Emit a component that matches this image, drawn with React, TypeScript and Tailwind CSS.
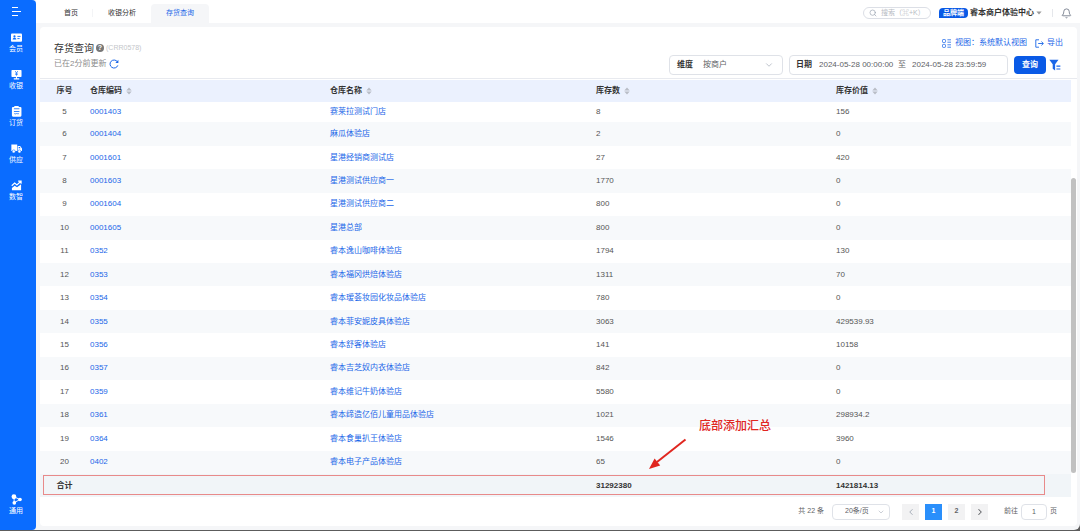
import type { ReactNode } from "react";
import { ChevronDown, ChevronLeft, ChevronRight, Search, Bell } from "lucide-react";

interface StockRow {
  no: number;
  code: string;
  name: string;
  qty: string;
  value: string;
}

const rows: StockRow[] = [
  { no: 5, code: "0001403", name: "赛莱拉测试门店", qty: "8", value: "156" },
  { no: 6, code: "0001404", name: "麻瓜体验店", qty: "2", value: "0" },
  { no: 7, code: "0001601", name: "星港经销商测试店", qty: "27", value: "420" },
  { no: 8, code: "0001603", name: "星港测试供应商一", qty: "1770", value: "0" },
  { no: 9, code: "0001604", name: "星港测试供应商二", qty: "800", value: "0" },
  { no: 10, code: "0001605", name: "星港总部", qty: "800", value: "0" },
  { no: 11, code: "0352", name: "睿本逸山咖啡体验店", qty: "1794", value: "130" },
  { no: 12, code: "0353", name: "睿本福冈烘焙体验店", qty: "1311", value: "70" },
  { no: 13, code: "0354", name: "睿本瑷荟妆园化妆品体验店", qty: "780", value: "0" },
  { no: 14, code: "0355", name: "睿本菲安妮皮具体验店", qty: "3063", value: "429539.93" },
  { no: 15, code: "0356", name: "睿本舒客体验店", qty: "141", value: "10158" },
  { no: 16, code: "0357", name: "睿本吉芝奴内衣体验店", qty: "842", value: "0" },
  { no: 17, code: "0359", name: "睿本维记牛奶体验店", qty: "5580", value: "0" },
  { no: 18, code: "0361", name: "睿本缔造亿佰儿童用品体验店", qty: "1021", value: "298934.2" },
  { no: 19, code: "0364", name: "睿本食巢扒王体验店", qty: "1546", value: "3960" },
  { no: 20, code: "0402", name: "睿本电子产品体验店", qty: "65", value: "0" },
];

const navItems: { label: string; icon: ReactNode }[] = [
  {
    label: "会员",
    icon: (
      <>
        <rect x="0" y="1.6" width="12" height="9" rx="1" fill="#fff" />
        <circle cx="3.8" cy="4.8" r="1.2" fill="#0a6cff" />
        <path d="M1.8 8.2c0-2.6 4-2.6 4 0z" fill="#0a6cff" />
        <path d="M7 4.8h3.4M7 7.2h2.4" stroke="#0a6cff" />
      </>
    ),
  },
  {
    label: "收银",
    icon: (
      <>
        <rect x="0.5" y="1" width="11" height="7.6" rx="0.8" fill="#fff" />
        <path d="M4.5 2.2 6 4.2l1.5-2M6 4.2v3.2M4.6 4.6h2.8M4.6 6h2.8" stroke="#0a6cff" strokeWidth="0.7" fill="none" />
        <path d="M6 8.6v2M3 10.8h6" stroke="#fff" strokeWidth="1.2" />
      </>
    ),
  },
  {
    label: "订货",
    icon: (
      <>
        <rect x="1" y="1" width="10.4" height="10.6" rx="1.2" fill="#fff" />
        <path d="M3.6 0h4.8v2H3.6z" fill="#fff" />
        <path d="M3.2 3h6M3.2 6h6M3.6 8.2c1 1 2 0 2.6 0s1.400.6 2.400 0" stroke="#0a6cff" strokeWidth="0.9" fill="none" />
      </>
    ),
  },
  {
    label: "供应",
    icon: (
      <>
        <path d="M0.4 1.6h6.400v7.200H0.400zM7.400 3.400h2.600L12 6v2.800H7.400z" fill="#fff" />
        <circle cx="3" cy="9.200" r="1.700" fill="#fff" stroke="#0a6cff" strokeWidth="0.600" />
        <circle cx="9.200" cy="9.200" r="1.700" fill="#fff" stroke="#0a6cff" strokeWidth="0.600" />
        <path d="M8.400 4.400h1.200l0.900 1.400H8.400z" fill="#0a6cff" />
      </>
    ),
  },
  {
    label: "数智",
    icon: (
      <>
        <path d="M1 11.200V8.600l3-2.400 2.600 1.800L11 4.600v6.600z" fill="#fff" />
        <path d="M0.800 6.200 4 3.400l2.400 1.900L10.600 1.600M7.800 1.200h3.200v3" stroke="#fff" strokeWidth="1.300" fill="none" />
      </>
    ),
  },
];

const generalIcon = (
  <>
    <circle cx="3.2" cy="3" r="2.6" fill="#fff" />
    <circle cx="3.6" cy="9.6" r="2" fill="#fff" />
    <circle cx="9.8" cy="6" r="2" fill="#fff" />
    <path d="M3.400 3v6.600L9.600 6z" stroke="#fff" fill="none" />
  </>
);

function NavItem({ label, icon }: { label: string; icon: ReactNode }) {
  return (
    <a href="#" className="flex flex-col items-center text-[7px] leading-[11px] text-white">
      <svg viewBox="0 0 12 12" className="w-[11px] h-[11px]">{icon}</svg>
      {label}
    </a>
  );
}

function SortHead({ children }: { children: ReactNode }) {
  return (
    <th className="pl-[5px] text-left font-bold">
      <button className="flex items-center gap-1">
        {children}
        <svg viewBox="0 0 6 8" className="w-1.5 h-2" fill="#b9bdc6">
          <path d="M3 0.4 5.7 3.4H0.3zM3 7.6 5.7 4.6H0.3z" />
        </svg>
      </button>
    </th>
  );
}

function Sidebar() {
  return (
    <nav className="w-9 shrink-0 flex flex-col items-center rounded-r bg-[#0a6cff] pr-1 pb-[14px]">
      <button aria-label="菜单" className="mt-[7px] mb-4">
        <svg viewBox="0 0 10 9" className="w-2.5 h-[9px]" stroke="#fff" fill="none">
          <path d="M1 0.5h6M1 4.5h9M1 8.5h6" />
        </svg>
      </button>
      <div className="flex flex-col gap-[15px]">
        {navItems.map((item) => (
          <NavItem key={item.label} {...item} />
        ))}
      </div>
      <div className="mt-auto">
        <NavItem label="通用" icon={generalIcon} />
      </div>
    </nav>
  );
}

function TopBar() {
  return (
    <header className="h-[23px] shrink-0 flex items-center bg-white pr-2 text-[7px] text-[#333]">
      <nav className="flex items-end self-stretch">
        <a href="#" className="w-14 h-[19px] pl-3.5 flex items-center justify-center">首页</a>
        <span className="w-px h-2 mb-1.5 bg-gray-100" />
        <a href="#" className="w-[58px] h-[19px] flex items-center justify-center">收银分析</a>
        <a href="#" className="w-[58px] h-[19px] rounded-t flex items-center justify-center bg-[#f5f6f8] text-[#1a66e8]">
          存货查询
        </a>
      </nav>
      <div className="ml-auto mt-[3px] flex items-center">
        <label className="w-[68px] h-3 px-[5px] flex items-center gap-1 rounded-full border border-[#dcdfe6]">
          <Search className="w-2 h-2 shrink-0 text-gray-400" />
          <input
            aria-label="搜索"
            placeholder="搜索（⌘+K）"
            className="min-w-0 flex-1 outline-none placeholder-[#b8bcc4]"
          />
        </label>
        <span className="ml-2 h-[10px] px-1 flex items-center rounded-r rounded-tl bg-[#0a5ae6] font-bold text-white">品牌端</span>
        <button className="ml-0.5 flex items-center gap-0.5 text-[8px] font-bold">
          睿本商户体验中心
          <svg viewBox="0 0 6 4" className="w-1.5 h-1" fill="#999"><path d="M0.4 0.4h5.2L3 3.4z" /></svg>
        </button>
        <span className="w-px h-2 ml-2.5 bg-gray-200" />
        <button aria-label="通知" className="ml-2">
          <Bell className="w-[11px] h-[11px] text-gray-500" strokeWidth={1.8} />
        </button>
      </div>
    </header>
  );
}

function PageHead() {
  return (
    <div className="h-[52px] shrink-0 px-3.5 flex justify-between border-b border-[#e8eaef]">
      <div className="pt-3.5">
        <div className="flex items-center h-3.5">
          <h1 className="text-[10px] text-[#333]">存货查询</h1>
          <span className="ml-0.5 w-2 h-2 rounded-full bg-[#777] text-white text-[7px] leading-2 text-center font-bold">?</span>
          <span className="ml-0.5 text-[7px] text-[#c4c6ca]">(CRR0578)</span>
        </div>
        <div className="mt-0.5 flex items-center gap-[3px] text-[8px] leading-[14px] text-[#8c8c8c]">
          已在2分前更新
          <button aria-label="刷新">
            <svg viewBox="0 0 10 10" className="w-2.5 h-2.5" fill="none" stroke="#1a66e8">
              <path d="M8.300 2.700A4 4 0 1 0 8.800 6.400" />
              <path d="M9.400 0.800v3.200H6.400z" fill="#1a66e8" stroke="none" />
            </svg>
          </button>
        </div>
      </div>
      <div className="pt-2.5 text-[8px]">
        <div className="h-3 flex justify-end items-center gap-2 text-[#1a66e8]">
          <button className="flex items-center gap-1">
            <svg viewBox="0 0 9 9" className="w-[9px] h-[9px]" stroke="currentColor" strokeWidth="0.8" fill="none">
              <rect x="0.5" y="0.5" width="3" height="3" rx="0.8" />
              <rect x="0.5" y="5.4" width="3" height="3" rx="0.8" />
              <path d="M5.4 0.8H9M5.4 3.2H9M5.4 5.8H9M5.4 8.2H9" />
            </svg>
            视图：系统默认视图
          </button>
          <button className="flex items-center gap-[3px]">
            <svg viewBox="0 0 9 9" className="w-[9px] h-[9px]" stroke="currentColor" strokeWidth="0.9" fill="none">
              <path d="M4 0.8H0.8v7.4H4M3.2 4.5h5M6.4 2.6l2 1.9-2 1.9" />
            </svg>
            导出
          </button>
        </div>
        <div className="mt-1.5 pr-0.5 flex items-center justify-end">
          <label className="relative w-[114px] h-5 pl-[7px] flex items-center rounded-sm border border-[#dfe2e8]">
            <span className="font-bold text-[#333]">维度</span>
            <select className="ml-2.5 flex-1 appearance-none outline-none text-[#606266]">
              <option>按商户</option>
            </select>
            <ChevronDown className="absolute right-2 w-2.5 h-2.5 text-gray-400" strokeWidth={1.5} />
          </label>
          <div className="ml-1.5 w-[219px] h-5 pl-1.5 flex items-center rounded-sm border border-[#dfe2e8] text-[#606266]">
            <label htmlFor="date-from" className="font-bold text-[#333]">日期</label>
            <input id="date-from" defaultValue="2024-05-28 00:00:00" className="ml-[7px] w-[77px] outline-none" />
            <label htmlFor="date-to" className="ml-0.5">至</label>
            <input id="date-to" defaultValue="2024-05-28 23:59:59" className="ml-1.5 w-[77px] outline-none" />
          </div>
          <button className="ml-1.5 w-8 h-[18px] rounded-sm bg-[#0a5ae6] font-bold text-white">查询</button>
          <button aria-label="筛选" className="ml-[3px]">
            <svg viewBox="0 0 11 11" className="w-3 h-3" fill="#1a66e8">
              <path d="M0.3 0.6h8.4L5.6 4.8v5.8L3.4 9V4.8z" />
              <path d="M6.8 6h3.6v1H6.8zM6.8 8.6h3.6v1H6.8z" />
            </svg>
          </button>
        </div>
      </div>
    </div>
  );
}

function StockTable() {
  return (
    <div className="flex-1 flex pr-px mt-px">
      <div className="relative flex-1 flex">
        <table className="w-full table-fixed text-[8px] leading-3 text-[#555]">
          <colgroup>
            <col className="w-[45px]" />
            <col />
            <col className="w-[266px]" />
            <col />
            <col />
          </colgroup>
          <thead>
            <tr className="h-[22px] bg-[#ebf1fe] text-[#333]">
              <th className="pl-1 font-bold">序号</th>
              <SortHead>仓库编码</SortHead>
              <SortHead>仓库名称</SortHead>
              <SortHead>库存数</SortHead>
              <SortHead>库存价值</SortHead>
            </tr>
          </thead>
          <tbody>
            {rows.map((row) => (
              <tr key={row.no} className="h-[23px] first:h-5 even:bg-[#f7f9fb]">
                <td className="pl-1 text-center">{row.no}</td>
                <td className="pl-[5px]"><a href="#" className="text-[#1a66e8]">{row.code}</a></td>
                <td className="pl-[5px]"><a href="#" className="text-[#1a66e8]">{row.name}</a></td>
                <td className="pl-[5px]">{row.qty}</td>
                <td className="pl-[5px]">{row.value}</td>
              </tr>
            ))}
          </tbody>
          <tfoot>
            <tr className="h-[23px] bg-[#f1f5f8] font-bold text-[#333]">
              <td className="pl-1 text-center">合计</td>
              <td />
              <td />
              <td className="pl-[5px]">31292380</td>
              <td className="pl-[5px]">1421814.13</td>
            </tr>
          </tfoot>
        </table>

        {/* Annotation on the summary row */}
        <div className="absolute left-[3px] right-[26px] bottom-0.5 h-5 border border-[#e88a8a]" />
        <div className="absolute left-[609px] bottom-[27px] flex flex-col items-start text-[#e0261f]">
          <span className="ml-[50px] text-[12px] leading-4 font-medium">底部添加汇总</span>
          <svg viewBox="0 0 38 32" className="mt-1 w-[38px] h-8" fill="currentColor">
            <path d="M36.5 1.5 8 24" stroke="currentColor" strokeWidth="2" />
            <path d="M0 31 5.6 20.4l5.6 7z" />
          </svg>
        </div>
      </div>
      <div className="w-[5px] flex flex-col pt-[98px] pb-6">
        <div className="flex-1 rounded-full bg-[#c1c1c1]" />
      </div>
    </div>
  );
}

function Pagination() {
  return (
    <div className="h-[29px] shrink-0 pr-5 flex items-center justify-end text-[7px] text-[#606266]">
      <span>共 22 条</span>
      <label className="relative ml-2 w-[58px] h-4 flex items-center rounded-sm border border-[#dfe2e8]">
        <select aria-label="每页条数" className="w-full pl-3 appearance-none outline-none">
          <option>20条/页</option>
        </select>
        <ChevronDown className="absolute right-1 w-2 h-2 text-gray-400" strokeWidth={1.5} />
      </label>
      <div className="ml-3 flex gap-1.5 font-bold">
        <button aria-label="上一页" className="w-[17px] h-4 flex items-center justify-center bg-[#f2f2f3]">
          <ChevronLeft className="w-2.5 h-2.5 text-gray-400" />
        </button>
        <button className="w-[17px] h-4 bg-[#2a8ffb] text-white">1</button>
        <button className="w-[17px] h-4 bg-[#f2f2f3]">2</button>
        <button aria-label="下一页" className="w-[17px] h-4 flex items-center justify-center bg-[#f2f2f3]">
          <ChevronRight className="w-2.5 h-2.5" strokeWidth={2.5} />
        </button>
      </div>
      <label htmlFor="page-no" className="ml-4">前往</label>
      <input
        id="page-no"
        defaultValue="1"
        className="mx-[3px] w-[26px] h-4 rounded-sm border border-[#dfe2e8] text-center outline-none"
      />
      <span>页</span>
    </div>
  );
}

export default function App() {
  return (
    <div className="min-h-screen flex flex-col bg-[#5c5c5c] pb-px font-['Liberation_Sans','Noto_Sans_CJK_SC','DejaVu_Sans',sans-serif]">
      <div className="flex-1 flex rounded-br-md bg-[#f5f6f8]">
        <Sidebar />
        <div className="flex-1 min-w-0 flex flex-col">
          <TopBar />
          <main className="flex-1 flex flex-col mt-1 ml-1 mr-[3px] mb-1 rounded bg-white">
            <PageHead />
            <StockTable />
            <Pagination />
          </main>
        </div>
      </div>
    </div>
  );
}
